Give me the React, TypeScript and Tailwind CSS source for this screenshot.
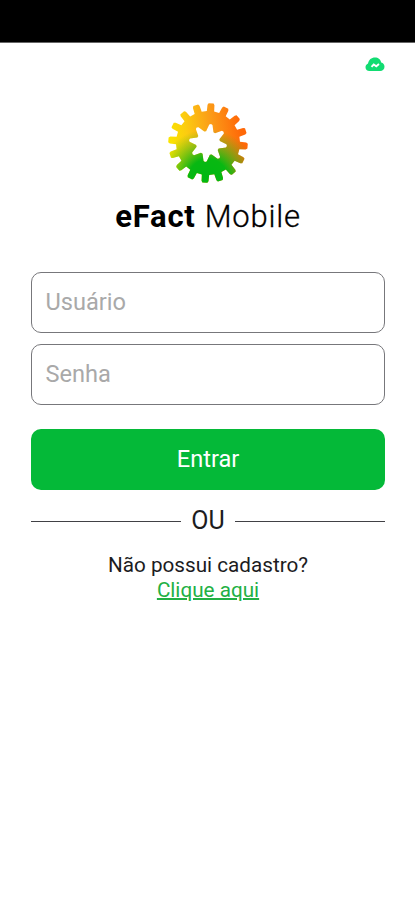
import { useState } from "react";

const polar = (radius: number, degrees: number) => {
    const angle = (degrees * Math.PI) / 180;
    return `${(radius * Math.sin(angle)).toFixed(2)} ${(-radius * Math.cos(angle)).toFixed(2)}`;
};

const gearTeeth = Array.from({ length: 16 }, (_, i) => {
    const a = 4.5 + i * 22.5;
    return [
        polar(32, a - 6.6),
        polar(38.2, a - 5.2),
        polar(39.8, a - 3.6),
        polar(39.8, a + 3.6),
        polar(38.2, a + 5.2),
        polar(32, a + 6.6),
    ].join(" L");
}).join(" L");

const starPoints = Array.from({ length: 8 }, (_, i) => {
    const a = 9 + i * 45;
    return [
        polar(18.5, a - 5),
        polar(19.2, a),
        polar(18.5, a + 5),
        polar(12, a + 18),
        polar(12, a + 27),
    ].join(" L");
}).join(" L");

function Logo() {
    return (
        <svg width="82" height="82" viewBox="-41 -41 82 82">
            <defs>
                <linearGradient
                    id="sun"
                    gradientUnits="userSpaceOnUse"
                    x1="-38"
                    y1="2"
                    x2="34"
                    y2="-8"
                >
                    <stop offset="0" stopColor="#fae400" />
                    <stop offset="0.25" stopColor="#fccc10" />
                    <stop offset="0.6" stopColor="#fb9c18" />
                    <stop offset="1" stopColor="#ff6808" />
                </linearGradient>
                <radialGradient
                    id="leaf"
                    gradientUnits="userSpaceOnUse"
                    cx="0"
                    cy="36"
                    r="50"
                >
                    <stop offset="0" stopColor="#00b812" />
                    <stop offset="0.4" stopColor="#08b812" />
                    <stop offset="1" stopColor="#40b812" stopOpacity="0" />
                </radialGradient>
            </defs>
            <path
                d={`M${gearTeeth}Z M${starPoints}Z`}
                fill="url(#sun)"
                fillRule="evenodd"
            />
            <path
                d={`M${gearTeeth}Z M${starPoints}Z`}
                fill="url(#leaf)"
                fillRule="evenodd"
            />
        </svg>
    );
}

function CloudStatus() {
    return (
        <svg width="20" height="14" viewBox="0 0 20 14">
            <path
                d="M4.500 14C2 14 .5 12.300.5 10.200.5 8.500 1.500 7.200 3 6.500 3.800 2.800 6.300.5 10 .5c3.200 0 5.700 2 6.200 5 2 .5 3.300 2.200 3.300 4.200 0 2.500-1.800 4.300-4.300 4.300Z"
                fill="#12dc72"
            />
            <path
                d="m6.500 9.800 2.200-2.300 2.600 1.800 2.700-2.300"
                fill="none"
                stroke="#fff"
                strokeWidth="1.900"
            />
        </svg>
    );
}

export default function App() {
    const [user, setUser] = useState("");
    const [password, setPassword] = useState("");

    return (
        <div className="flex h-[900px] w-full flex-col bg-white font-['Roboto',sans-serif] text-[#1c1c1e]">
            <div className="box-content h-[42px] shrink-0 border-b border-[#666] bg-black" />
            <header className="flex h-[59px] shrink-0 justify-end pt-[14px] pr-[30px]">
                <CloudStatus />
            </header>
            <main className="flex flex-col pr-[30px] pl-[31px]">
                <div className="flex flex-col items-center">
                    <Logo />
                    <h1 className="mt-[13px] flex h-10 items-center gap-[9px] text-[31px] leading-10 text-black">
                        <span className="font-bold tracking-[0.8px]">
                            eFact
                        </span>
                        <span className="font-light tracking-[0.8px] [-webkit-text-stroke:0.3px_black]">
                            Mobile
                        </span>
                    </h1>
                </div>
                <form
                    className="mt-[35px] flex flex-col"
                    onSubmit={(e) => e.preventDefault()}
                >
                    <input
                        className="h-[61px] rounded-[10px] border border-[#77777b] px-[13.5px] pb-[2px] text-[23.6px] outline-none placeholder:text-[#a9a9a9]"
                        placeholder="Usuário"
                        value={user}
                        onChange={(e) => setUser(e.target.value)}
                    />
                    <input
                        className="mt-[11px] h-[61px] rounded-[10px] border border-[#77777b] px-[13.5px] pb-[2px] text-[23.6px] outline-none placeholder:text-[#a9a9a9]"
                        type="password"
                        placeholder="Senha"
                        value={password}
                        onChange={(e) => setPassword(e.target.value)}
                    />
                    <button className="mt-6 h-[61px] rounded-[10px] bg-[#04b938] pt-px text-[23.6px] text-white">
                        Entrar
                    </button>
                </form>
                <div className="mt-[15px] flex h-8 items-center gap-[10px] text-[25px]">
                    <span className="h-px grow bg-[#414145]" />
                    <span className="leading-7">OU</span>
                    <span className="h-px grow bg-[#414145]" />
                </div>
                <div className="mt-4 flex flex-col items-center text-[20.7px] leading-[25px]">
                    <p>Não possui cadastro?</p>
                    <a
                        href="#"
                        className="text-[#22b044] underline decoration-2"
                    >
                        Clique aqui
                    </a>
                </div>
            </main>
        </div>
    );
}
